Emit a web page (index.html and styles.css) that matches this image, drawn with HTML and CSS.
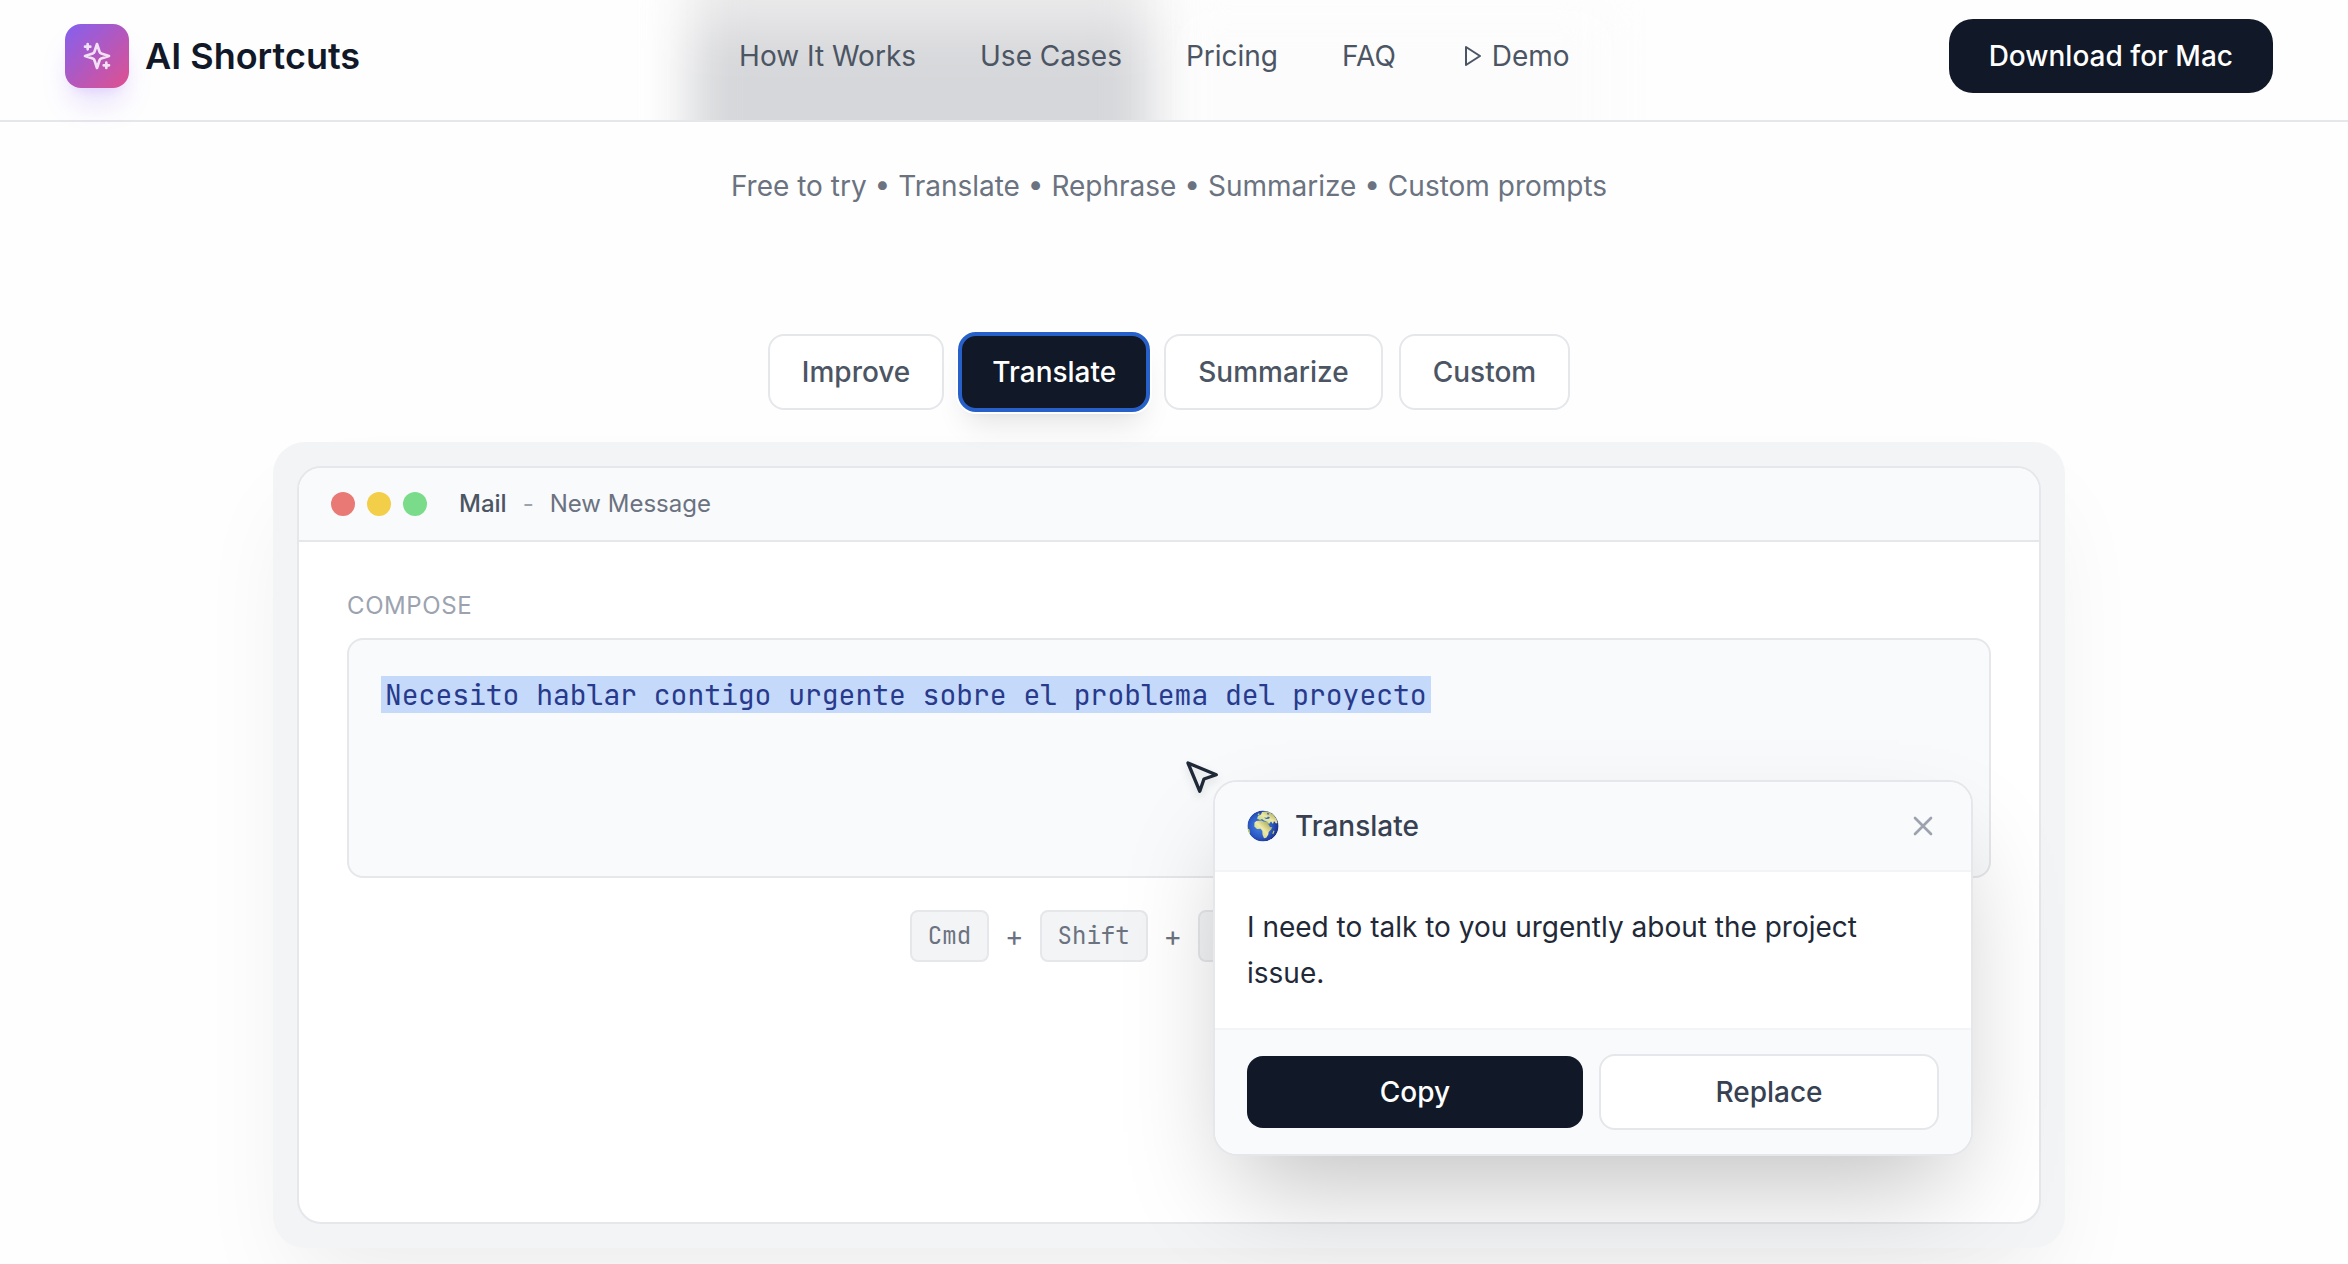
FILE: index.html
```html
<!DOCTYPE html>
<html lang="en">
<head>
  <meta charset="utf-8">
  <meta name="viewport" content="width=device-width, initial-scale=1">
  <title>AI Shortcuts</title>
  <link rel="stylesheet" href="styles.css">
</head>
<body>
  <header class="nav">
    <div class="nav-glow" aria-hidden="true">
      <span class="glow glow-light"></span>
      <span class="glow glow-dark"></span>
    </div>
    <a class="brand" href="#">
      <span class="brand-mark">
        <svg class="icon-md" viewBox="0 0 24 24" aria-hidden="true">
          <path d="m12 3-1.912 5.813a2 2 0 0 1-1.275 1.275L3 12l5.813 1.912a2 2 0 0 1 1.275 1.275L12 21l1.912-5.813a2 2 0 0 1 1.275-1.275L21 12l-5.813-1.912a2 2 0 0 1-1.275-1.275L12 3Z"/>
          <path d="M5 3v4M19 17v4M3 5h4M17 19h4"/>
        </svg>
      </span>
      <span class="brand-name">AI Shortcuts</span>
    </a>
    <nav class="nav-links">
      <a href="#how">How It Works</a>
      <a href="#cases">Use Cases</a>
      <a href="#pricing">Pricing</a>
      <a href="#faq">FAQ</a>
      <a class="demo-link" href="#demo">
        <svg class="icon-sm" viewBox="0 0 24 24" aria-hidden="true"><path d="M6 3l14 9-14 9V3z"/></svg>
        Demo
      </a>
    </nav>
    <button class="download" type="button">Download for Mac</button>
  </header>

  <main class="page">
    <p class="tagline">Free to try • Translate • Rephrase • Summarize • Custom prompts</p>

    <div class="tabs">
      <button class="tab" type="button">Improve</button>
      <button class="tab tab-active" type="button">Translate</button>
      <button class="tab" type="button">Summarize</button>
      <button class="tab" type="button">Custom</button>
    </div>

    <section class="frame" id="demo">
      <div class="window">
        <div class="titlebar">
          <div class="dots">
            <span class="dot dot-red"></span>
            <span class="dot dot-yellow"></span>
            <span class="dot dot-green"></span>
          </div>
          <div class="title">
            <span class="title-app">Mail</span>
            <span class="title-dash">-</span>
            <span>New Message</span>
          </div>
        </div>

        <div class="compose">
          <div class="compose-label">Compose</div>
          <div class="editor"><mark class="selection">Necesito hablar contigo urgente sobre el problema del proyecto</mark></div>
          <div class="keys">
            <kbd>Cmd</kbd><span>+</span><kbd>Shift</kbd><span>+</span><kbd></kbd>
          </div>
        </div>

        <svg class="cursor" viewBox="0 0 24 24" aria-hidden="true"><path d="m3 3 7.07 16.97 2.51-7.39 7.39-2.51L3 3z"/></svg>

        <div class="popup">
          <div class="popup-head">
            <svg class="globe" viewBox="0 0 32 32" aria-hidden="true">
              <defs>
                <radialGradient id="sea" cx="0.42" cy="0.5" r="0.58">
                  <stop offset="0" stop-color="#4a86e4"/>
                  <stop offset="0.6" stop-color="#2d5cc8"/>
                  <stop offset="1" stop-color="#1b2f86"/>
                </radialGradient>
                <linearGradient id="land" x1="0" y1="1" x2="1" y2="0">
                  <stop offset="0" stop-color="#a9cf74"/>
                  <stop offset="0.5" stop-color="#efeaa6"/>
                  <stop offset="1" stop-color="#8a9038"/>
                </linearGradient>
                <clipPath id="disc"><circle cx="16" cy="16" r="15.6"/></clipPath>
              </defs>
              <g clip-path="url(#disc)">
                <circle cx="16" cy="16" r="15.6" fill="url(#sea)"/>
                <path fill="url(#land)" d="M7.500 12.500 9.500 11l5-.5 2 1 3.500.2 1.500 2.800 1.500 2.500 2.300.2-1 2-2.600 2.800-.5 2.700-2 3-2.200.6-1.500-3.600-.2-3.700-1.600-2.300-3.700.3-2.700-2.500z"/>
                <path fill="url(#land)" d="m10 8.500 1-2.500 3-1.500 1-2.500 6-.8 5 3 3.500 4.800 1 4-1.500.5-2-2.500-1 3-2-2.500-2 2.500-2.500-2.500-2.500-1-2-1.500-2 1z"/>
                <path fill="#3564c4" d="m17 7.500 3 .3 1-1.300 2 1-1 1.200-3 .3zM20 3l1.500-.5.5 2-1.500.3z"/>
                <path fill="#c9cf5e" d="m0 18 2.500 1.500.5 3-1 2.500-2-1zM26.500 20.500l1 .4-1.200 3.400-1-.8zM10.500 4.500l1.500-1.500.6 1.400-1 1z"/>
              </g>
            </svg>
            <span class="popup-title">Translate</span>
            <button class="close" type="button" aria-label="Close">
              <svg class="icon-md" viewBox="0 0 24 24" aria-hidden="true"><path d="M18 6 6 18M6 6l12 12"/></svg>
            </button>
          </div>
          <p class="popup-text">I need to talk to you urgently about the project issue.</p>
          <div class="popup-actions">
            <button class="action action-primary" type="button">Copy</button>
            <button class="action action-secondary" type="button">Replace</button>
          </div>
        </div>
      </div>
    </section>
  </main>
</body>
</html>
```
FILE: styles.css
```css
* {
  box-sizing: border-box;
}

html {
  overflow-x: hidden;
}

body {
  margin: 0;
  background: #fefefe;
  color: #1f2937;
  font: 400 28px/40px Inter, "Liberation Sans", sans-serif;
}

button {
  margin: 0;
  border: 0;
  font: inherit;
  font-weight: 500;
  cursor: pointer;
}

a {
  color: inherit;
  text-decoration: none;
}

svg {
  flex: none;
  fill: none;
  stroke: currentColor;
  stroke-width: 2;
  stroke-linecap: round;
  stroke-linejoin: round;
}

.icon-sm {
  width: 24px;
  height: 24px;
}

.icon-md {
  width: 32px;
  height: 32px;
}

/* Navigation */
.nav {
  position: relative;
  display: flex;
  align-items: center;
  justify-content: space-between;
  padding: 19px 75px 27px 65px;
  border-bottom: 2px solid #e5e7eb;
}

.nav-glow {
  position: absolute;
  inset: 0;
  overflow: hidden;
}

.glow {
  position: absolute;
  filter: blur(24px);
}

.glow-dark {
  top: -80px;
  bottom: -80px;
  left: 29.4%;
  width: 462px;
  background: linear-gradient(#ececed 84px, #d6d7da 128px);
}

.glow-light {
  top: 10px;
  bottom: -80px;
  left: 50%;
  width: 440px;
  background: #fcfcfc;
}

.brand {
  position: relative;
  display: flex;
  align-items: center;
  gap: 16px;
}

.brand-mark {
  display: grid;
  place-items: center;
  width: 64px;
  height: 64px;
  border-radius: 16px;
  background: linear-gradient(135deg, #8460f0, #e0508e);
  box-shadow: 0 20px 30px -6px rgba(139, 92, 246, 0.2), 0 8px 12px -8px rgba(139, 92, 246, 0.2);
  color: rgba(255, 255, 255, 0.82);
}

.brand-name {
  color: #111827;
  font-size: 36px;
  font-weight: 600;
}

.nav-links {
  position: relative;
  display: flex;
  gap: 64px;
  color: #4b5563;
}

.demo-link {
  display: flex;
  align-items: center;
  gap: 8px;
}

.download {
  position: relative;
  padding: 17px 40px;
  border-radius: 24px;
  background: #111827;
  color: #fff;
}

/* Demo section */
.page {
  padding: 44px 74px 16px 64px;
}

.tagline {
  margin: 0 0 128px;
  color: #6b7280;
  text-align: center;
}

.tabs {
  display: flex;
  justify-content: center;
  gap: 16px;
  margin-bottom: 32px;
}

.tab {
  padding: 16px 32px;
  border: 2px solid #e5e7eb;
  border-radius: 16px;
  background: #fff;
  color: #4b5563;
}

.tab-active {
  border: 0;
  outline: 4px solid #2860c9;
  outline-offset: -2px;
  background: #111827;
  box-shadow: 0 0 0 4px #fff, 0 20px 30px -6px rgba(0, 0, 0, 0.1), 0 8px 12px -8px rgba(0, 0, 0, 0.1);
  color: #fff;
}

.frame {
  max-width: 1792px;
  margin: 0 auto;
  padding: 24px;
  border-radius: 32px;
  background: #f3f4f6;
  box-shadow: 0 50px 100px -24px rgba(0, 0, 0, 0.08);
}

.window {
  position: relative;
  border: 2px solid #e5e7eb;
  border-radius: 24px;
  background: #fff;
}

.titlebar {
  display: flex;
  align-items: center;
  gap: 32px;
  padding: 20px 32px;
  border-bottom: 2px solid #e5e7eb;
  border-radius: 22px 22px 0 0;
  background: #f9fafb;
}

.dots {
  display: flex;
  gap: 12px;
}

.dot {
  width: 24px;
  height: 24px;
  border-radius: 50%;
}

.dot-red {
  background: #e97975;
}

.dot-yellow {
  background: #f3ce49;
}

.dot-green {
  background: #7adc8b;
}

.title {
  display: flex;
  gap: 16px;
  color: #6b7280;
  font-size: 24px;
  line-height: 32px;
}

.title-app {
  color: #4b5563;
  font-weight: 500;
}

.title-dash {
  color: #9ca3af;
}

.compose {
  min-height: 680px;
  padding: 48px;
}

.compose-label {
  margin-bottom: 16px;
  color: #9ca3af;
  font-size: 24px;
  line-height: 32px;
  letter-spacing: 0.025em;
  text-transform: uppercase;
}

.editor {
  min-height: 240px;
  margin-bottom: 32px;
  padding: 32px;
  border: 2px solid #e5e7eb;
  border-radius: 16px;
  background: #f9fafb;
  font-family: "JetBrains Mono", "DejaVu Sans Mono", monospace;
  line-height: 46px;
}

.selection {
  padding: 0 4px;
  background: #c5d9fa;
  color: #273a8c;
}

.keys {
  display: flex;
  align-items: center;
  justify-content: center;
  gap: 16px;
  padding-right: 180px;
  color: #6b7280;
}

kbd {
  min-width: 50px;
  min-height: 52px;
  padding: 8px 16px;
  border: 2px solid #e5e7eb;
  border-radius: 8px;
  background: #f3f4f6;
  font: 400 24px/32px "JetBrains Mono", "DejaVu Sans Mono", monospace;
}

.cursor {
  position: absolute;
  top: 290px;
  right: 816px;
  width: 40px;
  height: 40px;
  color: #1f2937;
  filter: drop-shadow(0 4px 4px rgba(0, 0, 0, 0.12));
}

/* Result popup */
.popup {
  position: absolute;
  top: 312px;
  right: 66px;
  width: 760px;
  border: 2px solid #e5e7eb;
  border-radius: 24px;
  background: #fff;
  box-shadow: 0 50px 100px -24px rgba(0, 0, 0, 0.25);
}

.popup-head {
  display: flex;
  align-items: center;
  gap: 16px;
  padding: 24px 32px;
  border-bottom: 2px solid #f3f4f6;
  border-radius: 22px 22px 0 0;
  background: #f9fafb;
}

.globe {
  width: 32px;
  height: 32px;
  stroke: none;
}

.popup-title {
  color: #374151;
  font-weight: 500;
}

.close {
  display: flex;
  margin-left: auto;
  padding: 0;
  background: none;
  color: #9ca3af;
}

.popup-text {
  margin: 0;
  padding: 32px;
  line-height: 46px;
}

.popup-actions {
  display: flex;
  align-items: center;
  gap: 16px;
  padding: 24px 32px;
  border-top: 2px solid #f3f4f6;
  border-radius: 0 0 22px 22px;
  background: #f9fafb;
}

.action {
  flex: 1;
  padding: 16px 32px;
  border-radius: 16px;
}

.action-primary {
  background: #111827;
  color: #fff;
}

.action-secondary {
  border: 2px solid #e5e7eb;
  background: #fff;
  color: #374151;
}
```
